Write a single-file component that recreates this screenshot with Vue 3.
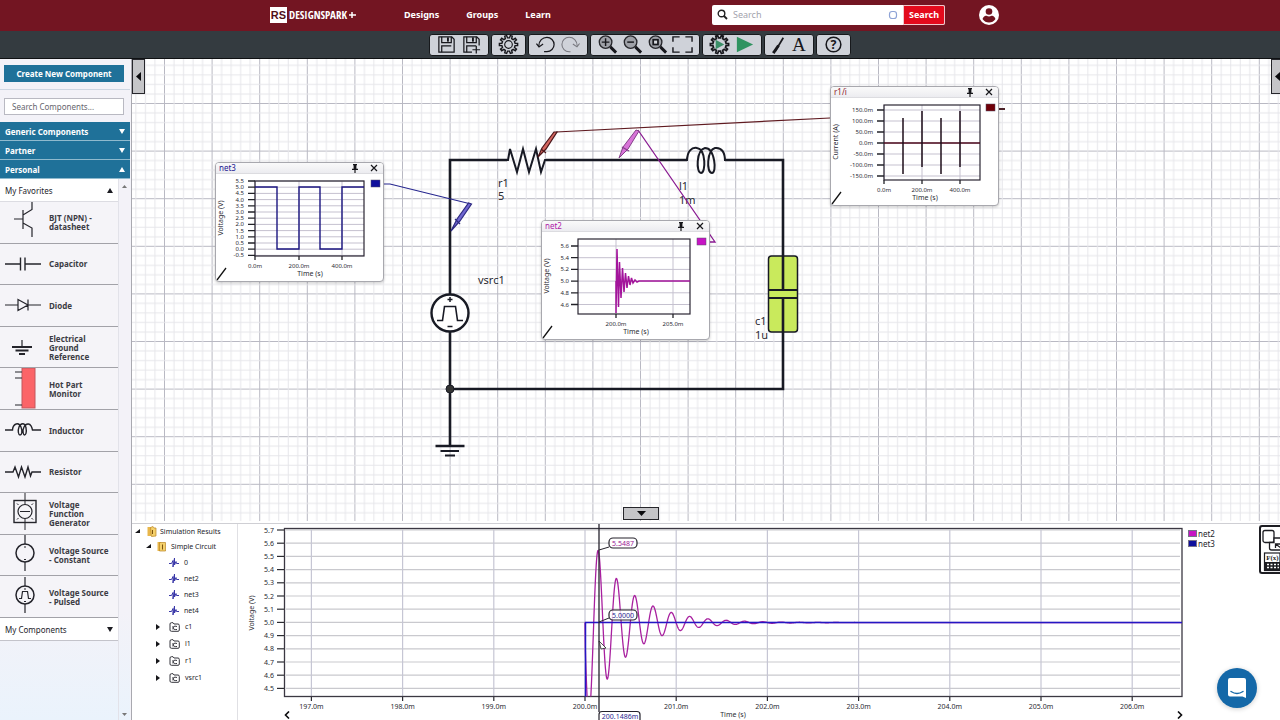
<script setup>
const range = (n) => Array.from({ length: n }, (_, i) => i)

const nav = ['Designs', 'Groups', 'Learn']

const toolGroups = [
  { id: 'file', tools: ['save', 'saveas'] },
  { id: 'settings', tools: ['gear'] },
  { id: 'history', tools: ['undo', 'redo'] },
  { id: 'zoom', tools: ['zoomin', 'zoomout', 'zoomfit', 'frame'] },
  { id: 'run', tools: ['simsetup', 'play'] },
  { id: 'draw', tools: ['line', 'text'] },
  { id: 'help', tools: ['help'] },
]

const sections = [
  { label: 'Generic Components', open: false },
  { label: 'Partner', open: false },
  { label: 'Personal', open: true },
]

const parts = [
  { icon: 'bjt', lines: ['BJT (NPN) -', 'datasheet'] },
  { icon: 'cap', lines: ['Capacitor'] },
  { icon: 'diode', lines: ['Diode'] },
  { icon: 'ground', lines: ['Electrical', 'Ground', 'Reference'] },
  { icon: 'hot', lines: ['Hot Part', 'Monitor'] },
  { icon: 'coil', lines: ['Inductor'] },
  { icon: 'res', lines: ['Resistor'] },
  { icon: 'func', lines: ['Voltage', 'Function', 'Generator'] },
  { icon: 'const', lines: ['Voltage Source', '- Constant'] },
  { icon: 'pulse', lines: ['Voltage Source', '- Pulsed'] },
]

const gearPath = (cx, cy, r1, r2, n) => {
  const pts = []
  for (let i = 0; i < n; i++) {
    const a = (i / n) * Math.PI * 2
    const s = Math.PI / n
    const add = (r, t) => pts.push(`${(cx + r * Math.cos(t)).toFixed(2)} ${(cy + r * Math.sin(t)).toFixed(2)}`)
    add(r1, a - s * 0.55)
    add(r2, a - s * 0.35)
    add(r2, a + s * 0.35)
    add(r1, a + s * 0.55)
  }
  return `M${pts.join('L')}Z`
}
const gear = gearPath(11, 11, 7, 9.6, 10)

const ringing = (x0, peakX, base, amp, period, end, step) => {
  let d = `M${x0} ${base}`
  for (let x = x0 + step; x <= end; x += step) {
    const t = x - peakX
    const y = base - amp * Math.exp((-0.49 * t) / period) * Math.cos((2 * Math.PI * t) / period)
    d += `L${x.toFixed(2)} ${y.toFixed(2)}`
  }
  return d
}

const widgets = [
  {
    id: 'net3', title: 'net3', x: 83, y: 103, color: '#1a1690', swatch: '#0f0f9c', axis: 'Voltage (V)',
    frame: [40, 7, 109, 75],
    yTicks: range(13).map((i) => ({ y: 7 + i * 6.2, label: (5.5 - i * 0.5).toFixed(1) })),
    labelX: 29,
    xTicks: [[40, '0.0m'], [84, '200.0m'], [127, '400.0m']],
    path: 'M40 13H62V75H84V13H105V75H127V13H149', stroke: '#1b1580', sw: 1.4,
  },
  {
    id: 'net2', title: 'net2', x: 409, y: 161, color: '#b01aa8', swatch: '#c714c4', axis: 'Voltage (V)',
    frame: [37, 7, 112, 75],
    yTicks: range(6).map((i) => ({ y: 14 + i * 11.7, label: (5.6 - i * 0.2).toFixed(1) })),
    labelX: 28,
    xTicks: [[75, '200.0m'], [132, '205.0m']],
    path: 'M75 49V81L76 17L77.5 75L78.5 30L80 66L81.5 36L83 60L84.5 41L86 56L87.5 44L89 53L90.5 46L92 51L94 48L96 50L98 49H149', stroke: '#a3149b', sw: 1.5,
  },
  {
    id: 'r1i', title: 'r1/i', x: 698, y: 27, color: '#8d1b2b', swatch: '#700008', axis: 'Current (A)',
    frame: [54, 7, 96, 75],
    yTicks: range(7).map((i) => ({ y: 12 + i * 11, label: (150 - i * 50).toFixed(1) + 'm' })),
    labelX: 43,
    xTicks: [[54, '0.0m'], [92, '200.0m'], [130, '400.0m']],
    path: 'M73 20V76M92 13V69M111 20V76M130 13V69', stroke: '#1d0d18', sw: 1.5, zero: 45,
  },
]

const signals = ['0', 'net2', 'net3', 'net4']
const devices = ['c1', 'l1', 'r1', 'vsrc1']

const yAxis = range(13).map((i) => ({ y: 530 + i * 13.2, label: (5.7 - i * 0.1).toFixed(1) }))
const xAxis = range(10).map((i) => ({ x: 311.4 + i * 91.2, label: `${197 + i}.0m` }))
const wave = ringing(585, 598.3, 622.6, 72, 18.3, 1182, 0.4)

const gridX = range(5)
</script>

<template>
  <div class="app">
    <header class="top">
      <div class="top-inner">
        <a class="brand" href="#" aria-label="DesignSpark">
          <span class="mark">RS</span>
          <span class="word">DESIGNSPARK</span>
          <svg width="8" height="8" viewBox="0 0 8 8"><path d="M0 4H7M3 1V7" stroke="#fff" stroke-width="1.5" /></svg>
        </a>
        <nav class="nav">
          <a v-for="n in nav" :key="n" href="#">{{ n }}</a>
        </nav>
        <form class="search" role="search" @submit.prevent>
          <svg width="11" height="11" viewBox="0 0 11 11"><circle cx="4.5" cy="4.5" r="3.3" fill="none" stroke="#222" stroke-width="1.4" /><path d="M7 7L10 10" stroke="#222" stroke-width="1.8" /></svg>
          <input type="text" placeholder="Search" aria-label="Search" />
          <svg width="10" height="10" viewBox="0 0 10 10"><rect x="1.5" y="1.5" width="7" height="7" rx="2.5" fill="none" stroke="#8ea3d6" stroke-width="1.2" /></svg>
          <button type="submit">Search</button>
        </form>
        <button class="avatar" type="button" aria-label="Account">
          <svg width="22" height="22" viewBox="0 0 22 22">
            <circle cx="11" cy="11" r="10" fill="#fff" />
            <circle cx="11" cy="7.5" r="3.3" fill="#6f1420" />
            <path d="M4.5 15C5.5 12.200 7.5 11.800 8.5 11.800Q11 13.300 13.5 11.800C14.5 11.800 16.5 12.200 17.5 15Q15 18.5 11 18.5T4.5 15Z" fill="#6f1420" />
          </svg>
        </button>
      </div>
    </header>

    <div class="toolbar" role="toolbar">
      <div v-for="g in toolGroups" :key="g.id" class="group" :class="g.id">
        <button v-for="t in g.tools" :key="t" type="button" :aria-label="t">
          <svg width="21" height="21" :viewBox="g.id === 'draw' ? '3 0 16 22' : '0 0 22 22'" fill="none" stroke="#17171c" stroke-width="1.3">
            <template v-if="t === 'save' || t === 'saveas'">
              <path v-if="t === 'save'" d="M3 3H16.500L19 5.500V19H3Z" />
              <path v-else d="M19 12V5.500L16.500 3H3V19H11.500M12 16.500H20M16 12.500V20.500" />
              <path d="M6 3V9H16V3M6 19V12.500H16" />
              <path d="M12.500 3.500V8" stroke-width="2" />
            </template>
            <template v-else-if="t === 'gear'">
              <path :d="gear" stroke-width="1.5" /><circle cx="11" cy="11" r="4" stroke-width="1.2" />
            </template>
            <template v-else-if="t === 'undo'">
              <path d="M4 12.500C4 7 8 3.500 12.500 3.500A7.500 7.500 0 0 1 12.500 18.500H9.500" /><path d="M1.500 10L4.200 13.500L8.500 10.500" />
            </template>
            <template v-else-if="t === 'redo'">
              <g stroke="#77777e" stroke-width="1.1"><path d="M18 12.500C18 7 14 3.500 9.500 3.500A7.500 7.500 0 0 0 9.500 18.500H11" /><path d="M20.500 10L17.800 13.500L13.500 10.500" /></g>
            </template>
            <template v-else-if="t.startsWith('zoom')">
              <circle cx="9" cy="8.5" r="6.6" fill="#9fa1a8" stroke="#26262b" stroke-width="1.4" />
              <path d="M14 13.500L20 19.500" stroke-width="3" />
              <path v-if="t === 'zoomin'" d="M5 8.500H13M9 4.500V12.500" stroke-width="1.5" />
              <path v-if="t === 'zoomout'" d="M5.500 8.500H12.500" stroke-width="1.5" />
              <rect v-if="t === 'zoomfit'" x="6.500" y="6" width="5" height="5" fill="#d6d8dd" stroke-width="1.8" />
            </template>
            <template v-else-if="t === 'frame'">
              <path d="M1 8V3H8M14 3H21V8M21 14V19H14M8 19H1V14" stroke-width="1.5" />
            </template>
            <template v-else-if="t === 'simsetup'">
              <path :d="gear" stroke-width="1.8" /><path d="M7 6L16 11L7 16Z" fill="#3b8f68" stroke="none" />
            </template>
            <path v-else-if="t === 'play'" d="M3 3L20 11L3 19Z" fill="#2f9360" stroke="none" />
            <template v-else-if="t === 'line'">
              <path d="M7 18L15.500 4" stroke-width="1.8" /><path d="M5 20L10.500 12" stroke-width="3" />
            </template>
            <text v-else-if="t === 'text'" x="11" y="18" class="glyph-a">A</text>
            <template v-else>
              <circle cx="11" cy="11" r="7.7" stroke-width="1.6" /><text x="11" y="15.5" class="glyph-q">?</text>
            </template>
          </svg>
        </button>
      </div>
    </div>

    <div class="body">
      <aside class="side">
        <div class="create"><button type="button">Create New Component</button></div>
        <div class="find"><input type="text" placeholder="Search Components..." aria-label="Search Components" /></div>
        <button v-for="s in sections" :key="s.label" type="button" class="section">
          <span>{{ s.label }}</span>
          <svg width="6" height="5" viewBox="0 0 6 5"><path :d="s.open ? 'M0 5L3 0L6 5Z' : 'M0 0L3 5L6 0Z'" fill="#fff" /></svg>
        </button>
        <div class="lists">
          <div class="list">
            <button type="button" class="sub">
              <span>My Favorites</span>
              <svg width="6" height="5" viewBox="0 0 6 5"><path d="M0 5L3 0L6 5Z" fill="#1c1c22" /></svg>
            </button>
            <ul class="parts">
              <li v-for="p in parts" :key="p.icon">
                <svg width="42" height="42" viewBox="0 0 42 42" fill="none" stroke="#24242b" stroke-width="1.2">
                  <path v-if="p.icon === 'bjt'" d="M14 18H23M23 9V28M23 14L32 8.500V0M23 22L32 27V36" />
                  <path v-if="p.icon === 'cap'" d="M5 21H20.500M25 21H41M20.500 14.500V27.500M25 14.500V27.500" stroke-width="1.4" />
                  <path v-if="p.icon === 'diode'" d="M5 21H18M28 21H41M18 15.500V26.500L28 21ZM28 15.500V26.500" />
                  <g v-if="p.icon === 'ground'"><path d="M22 14V21" /><path d="M12 21H32M15.500 24.500H28.500M19 28H25" stroke-width="1.8" /></g>
                  <g v-if="p.icon === 'hot'"><rect x="22" y="0" width="13" height="40" fill="#fb6468" stroke="#c2565c" stroke-width="1" /><path d="M15 4H22M15 10H22M15 37H22" /></g>
                  <path v-if="p.icon === 'coil'" d="M5 21H12.500C13 14 19 13 21 18C23 23 21.500 26 20 26S17.500 22 19 18S25 13 26 19C27 24 25.500 26 24.500 26S22 22 24 18S31 13 32.500 21H41" stroke-width="1.4" />
                  <path v-if="p.icon === 'res'" d="M5 21H13L15 16L18.500 26L21.500 16L25 26L28 16L30.500 25L32 21H41" stroke-width="1.4" />
                  <g v-if="p.icon === 'func'"><rect x="14" y="8.500" width="22" height="22" stroke-width="1.4" /><circle cx="25" cy="19.500" r="7" /><path d="M25 0V12.500M25 26.500V38M20 19.500H30M17 11.500L18.500 13M33 11.500L31.500 13M17 27.500L18.500 26M33 27.500L31.500 26" stroke-width="1" /></g>
                  <g v-if="p.icon === 'const' || p.icon === 'pulse'"><circle cx="25" cy="19" r="9" stroke-width="1.5" /><path d="M25 1V10M25 28V37M24 13H26M24 25.500H26" /></g>
                  <path v-if="p.icon === 'pulse'" d="M19 22.500H21.500L22.500 15.500H27.500L28.500 22.500H31" />
                </svg>
                <span class="label"><span v-for="l in p.lines" :key="l">{{ l }}</span></span>
              </li>
            </ul>
            <button type="button" class="sub last">
              <span>My Components</span>
              <svg width="6" height="5" viewBox="0 0 6 5"><path d="M0 0L3 5L6 0Z" fill="#1c1c22" /></svg>
            </button>
          </div>
          <div class="scroll">
            <svg width="5" height="3" viewBox="0 0 5 3"><path d="M0 3L2.5 0L5 3Z" fill="#777" /></svg>
            <svg width="5" height="3" viewBox="0 0 5 3"><path d="M0 0L2.5 3L5 0Z" fill="#777" /></svg>
          </div>
        </div>
      </aside>

      <main class="main">
        <section class="canvas">
          <svg class="sheet" width="100%" height="100%">
            <defs>
              <pattern id="grid" patternUnits="userSpaceOnUse" x="32" y="44" width="47.6" height="47.6">
                <g v-for="i in gridX" :key="i" :stroke="i ? '#e6e6ea' : '#b9b9c3'" stroke-width="1">
                  <path :d="`M${i * 9.52 + 0.5} 0V48M0 ${i * 9.52 + 0.5}H48`" />
                </g>
              </pattern>
            </defs>
            <rect width="100%" height="100%" fill="url(#grid)" />
            <g transform="translate(-132 -59)" fill="none" stroke="#181a24" stroke-width="2.6" stroke-linejoin="miter">
              <rect x="768.5" y="256" width="29" height="76" rx="3" fill="#c9ea5c" stroke-width="1.5" />
              <path d="M450 294V160H507M546 160H687M725 160H783V290M783 298V389H450" />
              <path d="M506 160H508L510 149L517 172L523 149L529 172L536 149L541 172L545 160H547" stroke-width="2" />
              <path d="M687 161C687 151 692 147 697 148C706 149 706 173 701 173C696 173 696 150 705 148C715 148 717 173 712 173C706 173 707 150 715 148C722 147 725 153 725 161" stroke-width="2" />
              <path d="M768 290H798M768 298H798" stroke-width="2" />
              <circle cx="450" cy="313" r="18.5" fill="#fff" stroke-width="2.4" />
              <path d="M437 320.500H442.500L444.500 306.500H455.500L457.500 320.500H463" stroke-width="1.6" />
              <path d="M447.500 299.500H452.500M450 297V302M447.500 326.500H452.500" stroke-width="1.5" />
              <path d="M450 332V446M435.500 446H464.500" />
              <path d="M440.500 451H459M445 455.500H455" stroke-width="2" />
              <circle cx="450" cy="389" r="4" fill="#333" stroke-width="1" />
              <g class="names">
                <text x="498" y="187">r1</text><text x="498" y="200">5</text>
                <text x="679" y="190">l1</text><text x="679" y="204">1m</text>
                <text x="478" y="284">vsrc1</text>
                <text x="755" y="325">c1</text><text x="755" y="339">1u</text>
              </g>
              <g stroke-width="1.2">
                <path d="M384 184H390L471 204" stroke="#26268f" />
                <path d="M471.500 204L468.500 203L457 219L451 231L460 221Z" fill="#6f66d0" stroke="#2e2a80" /><path d="M455 219L460 224" stroke="#2e2a80" />
                <path d="M830 118L556 132" stroke="#5f1a20" />
                <path d="M557 132L554 132L542 148L538 157L546 149Z" fill="#d5665f" stroke="#4b161a" /><path d="M541 149L546 153" stroke="#4b161a" />
                <path d="M638 130L715 242H709" stroke="#8a1a92" stroke-width="1.3" />
                <path d="M639 131L636 130L623 147L619 158L628 149Z" fill="#d873d8" stroke="#84408a" stroke-width="1" /><path d="M622 147L629 151" stroke="#84408a" />
                <path d="M999 109H1005" stroke="#3a0c12" stroke-width="1.8" />
              </g>
            </g>
          </svg>

          <article v-for="w in widgets" :key="w.id" class="widget" :style="{ left: w.x + 'px', top: w.y + 'px' }">
            <header>
              <span :style="{ color: w.color }">{{ w.title }}</span>
              <button type="button" aria-label="Pin"><svg width="8" height="9" viewBox="0 0 8 9"><path d="M2 .7H6M1 5.300H7M4 5V9" stroke="#16161a" stroke-width="1.2" /><rect x="2.6" y="1" width="2.8" height="4" fill="#16161a" /></svg></button>
              <button type="button" aria-label="Close"><svg width="8" height="8" viewBox="0 0 8 8"><path d="M1 1L7 7M7 1L1 7" stroke="#16161a" stroke-width="1.2" /></svg></button>
            </header>
            <svg class="plot" width="167" height="107" viewBox="1 0 167 107" fill="none">
              <g stroke="#c5c1cf" stroke-width="1">
                <path v-for="t in w.yTicks" :key="t.label" :d="`M${w.frame[0]} ${t.y}H${w.frame[0] + w.frame[2]}`" />
                <path v-for="t in w.xTicks" :key="t[1]" :d="`M${t[0]} ${w.frame[1]}V${w.frame[1] + w.frame[3]}`" />
              </g>
              <rect :x="w.frame[0]" :y="w.frame[1]" :width="w.frame[2]" :height="w.frame[3]" stroke="#2a2633" stroke-width="1.2" />
              <g stroke="#222228" stroke-width="1.3">
                <path v-for="t in w.yTicks" :key="t.label" :d="`M${w.frame[0] - 7} ${t.y}H${w.frame[0]}`" />
                <path v-for="t in w.xTicks" :key="t[1]" :d="`M${t[0]} 82V86`" />
              </g>
              <path v-if="w.zero" :d="`M54 ${w.zero}H150`" stroke="#4d0a1c" stroke-width="1.5" />
              <path :d="w.path" :stroke="w.stroke" :stroke-width="w.sw" />
              <g class="tick">
                <text v-for="t in w.yTicks" :key="t.label" :x="w.labelX" :y="t.y + 2" text-anchor="end">{{ t.label }}</text>
                <text v-for="t in w.xTicks" :key="t[1]" :x="t[0]" y="94" text-anchor="middle">{{ t[1] }}</text>
                <text class="axis" x="95" y="102" text-anchor="middle">Time (s)</text>
                <text class="axis" transform="translate(8 44) rotate(-90)" text-anchor="middle">{{ w.axis }}</text>
              </g>
              <rect x="156" y="6" width="9" height="7" :fill="w.swatch" stroke="#55506a" stroke-width=".5" />
              <path d="M2 106L11 94" stroke="#111" stroke-width="1.3" />
            </svg>
          </article>

          <button type="button" class="fold left" aria-label="Collapse components"><svg width="5" height="9" viewBox="0 0 5 9"><path d="M5 0V9L0 4.5Z" fill="#0c0c0f" /></svg></button>
          <button type="button" class="fold right" aria-label="Expand properties"><svg width="5" height="9" viewBox="0 0 5 9"><path d="M5 0V9L0 4.5Z" fill="#0c0c0f" /></svg></button>
          <button type="button" class="fold down" aria-label="Collapse results"><svg width="9" height="5" viewBox="0 0 9 5"><path d="M0 0H9L4.5 5Z" fill="#0c0c0f" /></svg></button>
        </section>

        <section class="results">
          <ul class="tree">
            <li class="root">
              <svg width="5" height="5" viewBox="0 0 5 5"><path d="M5 0V4H0Z" fill="#16161a" /></svg>
              <svg width="10" height="11" viewBox="0 0 10 11"><path d="M.5 1H4V10H.5Z" fill="#e8b64a" /><path d="M3.5 1.5L6 .5L7 2H9V10L4.5 10.5Z" fill="#f4d06b" stroke="#b98523" stroke-width=".7" /><path d="M5.5 4V8" stroke="#7a5310" /></svg>
              <span>Simulation Results</span>
            </li>
            <li class="circuit">
              <svg width="5" height="5" viewBox="0 0 5 5"><path d="M5 0V4H0Z" fill="#16161a" /></svg>
              <svg width="10" height="11" viewBox="0 0 10 11"><path d="M.5 1H4V10H.5Z" fill="#e8b64a" /><path d="M2.5 1.5H8.5V10H2.5Z" fill="#f4d06b" stroke="#b98523" stroke-width=".7" /><path d="M5.5 3.5V8.5" stroke="#7a5310" /></svg>
              <span>Simple Circuit</span>
            </li>
            <li v-for="s in signals" :key="s" class="signal">
              <svg width="10" height="11" viewBox="0 0 10 11"><path d="M0 6.500H2.500L4 3.500V10L5.500 1V8L7 4.500L7.500 6.500H10" fill="none" stroke="#3937a8" stroke-width="1" /></svg>
              <span>{{ s }}</span>
            </li>
            <li v-for="d in devices" :key="d" class="device">
              <svg width="4" height="6" viewBox="0 0 4 6"><path d="M0 0L4 3L0 6Z" fill="#16161a" /></svg>
              <svg width="11" height="10" viewBox="0 0 11 10"><path d="M1 2Q1 .7 2.500 .7H4L5 2H9Q10.300 2 10.300 3.500V8Q10.300 9.300 9 9.300H2.500Q1 9.300 1 8Z" fill="none" stroke="#35353c" /><path d="M8 4.500Q5 3 4.500 5.500T8 7.500M4 4V7.500" fill="none" stroke="#35353c" /></svg>
              <span>{{ d }}</span>
            </li>
          </ul>

          <div class="chart">
            <svg width="100%" height="196" viewBox="238 524 950 196" preserveAspectRatio="xMinYMin meet" fill="none">
              <defs><clipPath id="area"><rect x="284" y="528.5" width="898" height="168" /></clipPath></defs>
              <g stroke="#c9c9ce" stroke-width="1.2">
                <path v-for="t in yAxis" :key="t.label" :d="`M286 ${t.y}H1180`" />
              </g>
              <g stroke="#c6c6d4" stroke-width="1.2">
                <path v-for="t in xAxis" :key="t.label" :d="`M${t.x} 530V696`" />
              </g>
              <rect x="284.5" y="528.5" width="897.5" height="168" stroke="#3b3842" stroke-width="1.3" />
              <g stroke="#2b2b31" stroke-width="1.2">
                <path v-for="t in yAxis" :key="t.label" :d="`M277 ${t.y}H284`" />
                <path v-for="t in xAxis" :key="t.label" :d="`M${t.x} 697V701`" />
              </g>
              <g clip-path="url(#area)">
                <path :d="wave" stroke="#a8209f" stroke-width="1.3" />
                <path d="M585.500 697V622.500H1182" stroke="#2417c4" stroke-width="1.5" />
              </g>
              <path d="M599 524V712" stroke="#26232d" stroke-width="1.3" />
              <path d="M599 641L606 648L601 649Z" fill="#fff" stroke="#222" stroke-width=".8" />
              <path d="M599 550L609 547M599 622L609 618" stroke="#26232d" />
              <g fill="#fff" stroke="#26232d" stroke-width="1.2">
                <rect x="609" y="538" width="28" height="10" rx="4" />
                <rect x="609" y="610" width="28" height="10" rx="4" fill-opacity=".8" />
                <rect x="599" y="711.5" width="41" height="12" rx="3" />
              </g>
              <g class="tick big">
                <text x="623" y="545.5" text-anchor="middle" class="mag">5.5487</text>
                <text x="623" y="617.5" text-anchor="middle" class="blu">5.0000</text>
                <text x="620" y="719" text-anchor="middle" class="blu">200.1486m</text>
                <text v-for="t in yAxis" :key="t.label" x="274" :y="t.y + 2.5" text-anchor="end">{{ t.label }}</text>
                <text v-for="t in xAxis" :key="t.label" :x="t.x" y="709" text-anchor="middle">{{ t.label }}</text>
                <text x="733" y="717" text-anchor="middle">Time (s)</text>
                <text transform="translate(254 613) rotate(-90)" text-anchor="middle">Voltage (V)</text>
              </g>
            </svg>
            <button type="button" class="pan prev" aria-label="Pan left"><svg width="6" height="8" viewBox="0 0 6 8"><path d="M5 .5L1.5 4L5 7.5" fill="none" stroke="#0c0c0f" stroke-width="1.6" /></svg></button>
            <button type="button" class="pan next" aria-label="Pan right"><svg width="6" height="8" viewBox="0 0 6 8"><path d="M1 .5L4.5 4L1 7.5" fill="none" stroke="#0c0c0f" stroke-width="1.6" /></svg></button>
          </div>

          <ul class="legend">
            <li><i class="m"></i>net2</li>
            <li><i class="b"></i>net3</li>
          </ul>

          <div class="side-tools">
            <button type="button" aria-label="Detach chart"><svg width="22" height="25" viewBox="0 0 22 25" fill="#fff" stroke="#1d1d22" stroke-width="1.3"><rect x="2" y="3.5" width="11" height="12" rx="2" /><path d="M13 11H19Q21 11 21 13V23H10.500Q8.500 23 8.500 21V15.500H13Z" /><path d="M20 21L14.500 17M14.500 21V17H19" fill="none" /></svg></button>
            <button type="button" aria-label="Function calculator"><svg width="20" height="20" viewBox="0 0 20 20"><rect x="3.5" y="1" width="15.5" height="17.5" fill="#fff" stroke="#1d1d22" stroke-width="1.2" /><text x="11.5" y="8" class="fx">F(x)</text><rect x="4" y="10" width="15" height="8.5" fill="#1d1d22" /><path d="M6 12.500H18M6 15.500H18" stroke="#fff" stroke-dasharray="2 1.5" stroke-width="1.5" /></svg></button>
          </div>
        </section>
      </main>
    </div>

    <button type="button" class="chat" aria-label="Open chat">
      <svg width="22" height="24" viewBox="0 0 22 24"><path d="M4 2H18Q20 2 20 4V22L16.500 20.500H4Q2 20.500 2 18.500V4Q2 2 4 2Z" fill="#fff" /><path d="M5 15.500Q11 19.500 17 15.500" fill="none" stroke="#1468a8" stroke-width="1.4" stroke-linecap="round" /></svg>
    </button>
  </div>
</template>

<style>
body { margin: 0; }
</style>

<style scoped>
* { box-sizing: border-box; }
.app { height: 100vh; display: flex; flex-direction: column; overflow: hidden; background: #fff; color: #24242b; font-family: "Noto Sans", "Open Sans", sans-serif; font-size: 8px; }
button { font: inherit; color: inherit; border: 0; padding: 0; background: none; cursor: pointer; }
svg { display: block; flex: none; }
ul { list-style: none; margin: 0; padding: 0; }
a { color: inherit; text-decoration: none; }

.top { background: #731522; color: #fff; height: 31px; flex: none; }
.top-inner { width: 740px; max-width: 100%; height: 29px; margin: 0 auto; display: flex; align-items: center; padding-right: 10px; }
.brand { display: flex; align-items: center; gap: 2px; width: 134px; }
.mark { background: #fff; color: #511019; font: bold 11px/16px "Liberation Sans", sans-serif; width: 17px; height: 16px; text-align: center; }
.word { font: bold 11px/16px "Liberation Sans Narrow", "Open Sans Condensed", "DejaVu Sans Condensed", sans-serif; }
.nav { display: flex; gap: 27px; font-weight: bold; font-size: 9px; }
.search { margin-left: auto; margin-right: 33px; display: flex; align-items: center; width: 233px; height: 20px; background: #fff; border-radius: 2px; padding-left: 5px; overflow: hidden; }
.search input { flex: 1; min-width: 0; border: 0; outline: 0; padding: 0 5px; font: 9px "Noto Sans", sans-serif; background: none; }
.search input::placeholder { color: #a3a3ad; opacity: 1; }
.search button { background: #e30a1c; color: #fff; font-weight: bold; font-size: 9px; width: 42px; height: 20px; margin-left: 5px; border: 1px solid #f0c5ca; border-radius: 0 2px 2px 0; }

.toolbar { background: #343b40; border-bottom: 1px solid #0f1113; height: 28px; flex: none; display: flex; justify-content: center; align-items: center; gap: 2px; }
.group { display: flex; align-items: center; justify-content: center; gap: 4px; height: 22px; padding: 0 6px; background: #cfd2d9; border: 1px solid #17191c; border-radius: 3px; }
.group.draw svg { width: 16px; }
.glyph-a { font: 20px "Liberation Serif", serif; text-anchor: middle; fill: #17171c; stroke: none; }
.glyph-q { font: bold 13px "Noto Sans", sans-serif; text-anchor: middle; fill: #17171c; stroke: none; }

.body { flex: 1; min-height: 0; display: flex; }
.side { width: 132px; flex: none; display: flex; flex-direction: column; background: #f3f2f8; border-right: 1px solid #a9a9b0; padding-right: 1px; }
.create { padding: 6px 6px 7px 4px; border-bottom: 1px solid #cdd6e2; }
.create button { display: block; width: 100%; height: 17px; background: #1f7199; color: #fff; font-weight: bold; font-size: 8px; }
.find { padding: 8px 6px 7px 4px; }
.find input { display: block; width: 100%; height: 17px; border: 1px solid #b9b9c2; background: #fff; padding: 0 7px; font: 8px "Noto Sans", sans-serif; outline: 0; }
.find input::placeholder { color: #66666e; opacity: 1; }
.section { height: 19px; flex: none; display: flex; align-items: center; justify-content: space-between; padding: 0 5px; background: #1f7199; color: #fff; font-weight: bold; font-size: 8px; border-bottom: 1px solid #8fbace; }
.lists { flex: 1; min-height: 0; display: flex; background: linear-gradient(#f3f2f8 80%, #eaf3fc); }
.list { flex: 1; }
.sub { width: 100%; height: 23px; display: flex; align-items: center; justify-content: space-between; padding: 0 5px; background: #fff; font-size: 8px; border-bottom: 1px solid #dcdce2; }
.sub.last { border-color: #c3c3ca; }
.parts { height: 416px; display: flex; flex-direction: column; }
.parts li { flex: 1; min-height: 0; display: flex; align-items: center; gap: 7px; border-bottom: 1px solid #a2a2a8; background: #f5f4f8; overflow: hidden; }
.label { display: flex; flex-direction: column; font-weight: bold; font-size: 8px; line-height: 9px; color: #3c3c44; }
.scroll { width: 12px; display: flex; flex-direction: column; align-items: center; justify-content: space-between; padding: 6px 0 4px; border-left: 1px solid #e2e2e9; }

.main { flex: 1; min-width: 0; display: flex; flex-direction: column; }
.canvas { position: relative; flex: 1; min-height: 0; overflow: hidden; border-bottom: 2px solid #fff; }
.names text { font: 11px "Noto Sans", sans-serif; fill: #2a2a31; stroke: none; }
.widget { position: absolute; width: 169px; height: 120px; background: #fff; border: 1px solid #a8a8ae; border-radius: 4px; box-shadow: 0 1px 3px #0003; overflow: hidden; }
.widget header { height: 11px; display: flex; align-items: center; gap: 11px; padding: 0 5px 0 3px; background: linear-gradient(#fafafa, #ececf0); border-bottom: 1px solid #dcdce0; font-size: 8px; line-height: 10px; }
.widget header span { flex: 1; }
.tick text { font: 6px "Noto Sans", sans-serif; fill: #2b2b33; }
.tick text.axis, .big text { font-size: 7px; }
.big text.mag { fill: #9b1a94; }
.big text.blu { fill: #2a2690; }
.fold { position: absolute; display: flex; align-items: center; justify-content: center; background: #c5c5c8; border: 1px solid #26262b; }
.fold.left { left: 0; top: 0; width: 13px; height: 35px; }
.fold.right { right: -4px; top: 0; width: 13px; height: 35px; }
.fold.down { left: 491px; bottom: 1px; width: 36px; height: 13px; }

.results { height: 197px; flex: none; display: flex; border-top: 1px solid #cfcfd4; }
.tree { width: 106px; flex: none; border-right: 1px solid #e0e0e4; }
.tree li { display: flex; align-items: center; gap: 5px; height: 16px; font-size: 7px; white-space: nowrap; }
.tree .root { height: 14px; padding-left: 3px; gap: 3px; }
.tree .root svg:first-child { margin-right: 4px; }
.tree .circuit { padding-left: 14px; gap: 4px; }
.tree .circuit svg:first-child { margin-right: 2px; }
.tree .signal { padding-left: 37px; }
.tree .device { padding-left: 24px; height: 17px; }
.tree .device svg:first-child { margin-right: 4px; }
.chart { position: relative; flex: 1; min-width: 0; }
.pan { position: absolute; bottom: 1px; }
.pan.prev { left: 46px; }
.pan.next { right: 5px; }
.legend { width: 71px; flex: none; padding-top: 4px; }
.legend li { display: flex; align-items: center; gap: 1px; height: 10px; font-size: 8px; }
.legend i { width: 9px; height: 7px; border: 1px solid #77728a; }
.legend .m { background: #c714c4; }
.legend .b { background: #0f0f9c; }
.side-tools { width: 21px; height: 49px; flex: none; margin-top: 1px; border: 2px solid #1d1d22; border-right: 0; border-radius: 3px 0 0 3px; overflow: hidden; background: #fff; }
.side-tools button { display: block; }
.fx { font: bold 7px "Liberation Serif", serif; text-anchor: middle; fill: #1d1d22; }
.chat { position: fixed; right: 23px; bottom: 12px; width: 40px; height: 40px; border-radius: 50%; background: #1468a8; display: flex; align-items: center; justify-content: center; box-shadow: 0 1px 5px #0003; }
</style>
